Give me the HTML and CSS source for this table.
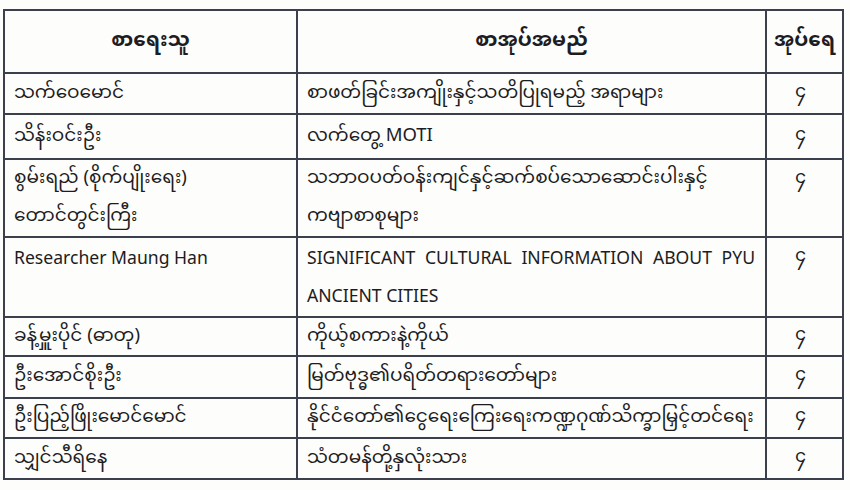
FILE: index.html
```html
<!DOCTYPE html>
<html lang="my">
<head>
<meta charset="utf-8">
<link rel="stylesheet" href="styles.css">
</head>
<body>
<table class="books">
  <colgroup>
    <col class="c-author">
    <col class="c-title">
    <col class="c-qty">
  </colgroup>
  <thead>
    <tr class="r-head">
      <th>စာရေးသူ</th>
      <th>စာအုပ်အမည်</th>
      <th>အုပ်ရေ</th>
    </tr>
  </thead>
  <tbody>
    <tr class="r1">
      <td>သက်ဝေမောင်</td>
      <td>စာဖတ်ခြင်းအကျိုးနှင့်သတိပြုရမည့် အရာများ</td>
      <td class="qty">၄</td>
    </tr>
    <tr class="r2">
      <td>သိန်းဝင်းဦး</td>
      <td>လက်တွေ့ MOTI</td>
      <td class="qty">၄</td>
    </tr>
    <tr class="r3 multi">
      <td>စွမ်းရည် (စိုက်ပျိုးရေး)<br>တောင်တွင်းကြီး</td>
      <td>သဘာဝပတ်ဝန်းကျင်နှင့်ဆက်စပ်သောဆောင်းပါးနှင့်<br>ကဗျာစာစုများ</td>
      <td class="qty">၄</td>
    </tr>
    <tr class="r4 multi">
      <td class="latin">Researcher Maung Han</td>
      <td class="latin just">SIGNIFICANT CULTURAL INFORMATION ABOUT PYU ANCIENT CITIES</td>
      <td class="qty">၄</td>
    </tr>
    <tr class="r5">
      <td>ခန့်မှူးပိုင် (ဓာတု)</td>
      <td>ကိုယ့်စကားနဲ့ကိုယ်</td>
      <td class="qty">၄</td>
    </tr>
    <tr class="r6">
      <td>ဦးအောင်စိုးဦး</td>
      <td>မြတ်ဗုဒ္ဓ၏ပရိတ်တရားတော်များ</td>
      <td class="qty">၄</td>
    </tr>
    <tr class="r7">
      <td>ဦးပြည့်ဖြိုးမောင်မောင်</td>
      <td>နိုင်ငံတော်၏ငွေရေးကြေးရေးကဏ္ဍဂုဏ်သိက္ခာမြှင့်တင်ရေး</td>
      <td class="qty">၄</td>
    </tr>
    <tr class="r8">
      <td>သျှင်သီရိနေ</td>
      <td>သံတမန်တို့နှလုံးသား</td>
      <td class="qty">၄</td>
    </tr>
  </tbody>
</table>
</body>
</html>
```
FILE: styles.css
```css
html, body {
  margin: 0;
  padding: 0;
  background: #fdfdfb;
}
body {
  padding: 9px 0 0 3px;
  font-family: "Noto Sans Myanmar", "Padauk", "Myanmar Text", "Noto Sans", "Open Sans", sans-serif;
  color: #1c1c22;
  font-size: 18.5px;
}
.books {
  border-collapse: collapse;
  width: 839px;
  table-layout: fixed;
}
.c-author { width: 293px; }
.c-title { width: 469px; }
.c-qty { width: 77px; }
.books th,
.books td {
  border: 2px solid #3c3f4c;
  padding: 0 9px;
  vertical-align: middle;
  text-align: left;
  line-height: 32px;
  font-weight: normal;
}
.books th {
  text-align: center;
  font-weight: bold;
  font-size: 20px;
  padding: 0 2px;
  white-space: nowrap;
}
.books td.qty {
  text-align: center;
  font-size: 18px;
  padding: 0 8px 2px 0;
}
.books .multi td {
  vertical-align: top;
  line-height: 38px;
}
.books td.latin {
  font-family: "Noto Sans", "Open Sans", sans-serif;
  font-size: 17.6px;
}
.books td.just {
  text-align: justify;
  padding-right: 10px;
}
.r-head { height: 63px; }
.r1 { height: 41px; }
.r2 { height: 45px; }
.r3 { height: 77px; }
.r4 { height: 80px; }
.r5 { height: 39px; }
.r6 { height: 42px; }
.r7 { height: 40px; }
.r8 { height: 41px; }
```
